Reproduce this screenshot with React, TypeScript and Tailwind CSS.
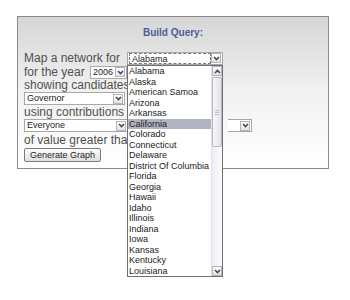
import React from 'react';

const states = [
    'Alabama', 'Alaska', 'American Samoa', 'Arizona', 'Arkansas', 'California', 'Colorado',
    'Connecticut', 'Delaware', 'District Of Columbia', 'Florida', 'Georgia', 'Hawaii', 'Idaho',
    'Illinois', 'Indiana', 'Iowa', 'Kansas', 'Kentucky', 'Louisiana',
];

const Chevron: React.FC<{ up?: boolean }> = ({ up }) => (
    <svg width="7" height="5" viewBox="0 0 7 5">
        <path d={up ? 'M1 4 L3.5 1.5 L6 4' : 'M1 1 L3.5 3.5 L6 1'} fill="none" stroke="#3c4a66" strokeWidth="1.6" />
    </svg>
);

const ArrowBox: React.FC<{ up?: boolean }> = ({ up }) => (
    <div className="w-[10px] h-[10px] border border-[#b4b4b4] bg-gradient-to-b from-white to-[#e4e4e8] flex items-center justify-center shrink-0">
        <Chevron up={up} />
    </div>
);

const Select: React.FC<{ value: string; className: string; focused?: boolean }> = ({ value, className, focused }) => (
    <div className={`h-[13px] border border-[#a8a8a8] bg-white flex items-center pr-[1px] overflow-hidden ${className}`}>
        <div className={`flex-1 h-[11px] leading-[10px] text-[9px] text-[#222] pl-[2px] whitespace-nowrap ${focused ? 'border border-dashed border-[#777] ml-[1px]' : ''}`}>
            {value}
        </div>
        <ArrowBox />
    </div>
);

export default function App() {
    return (
        <div className="w-[350px] h-[300px] bg-white pt-[16px] pl-[17px] font-['Liberation_Sans',Arial,sans-serif]">
            <div className="w-[312px] h-[153px] border border-[#8a8a8a] bg-gradient-to-b from-[#d6d6d6] via-[#f2f2f2] to-white pl-[6px] pt-[10px]">
                {/* Title */}
                <div className="h-[12px] leading-[12px] text-center text-[10px] font-bold text-[#4d5c99] pr-[6px]">
                    Build Query:
                </div>

                <div className="mt-[12px] flex flex-col text-[12px] text-[#505050]">
                    <div className="relative h-[14px] flex items-center">
                        <span className="w-[103px] leading-[14px]">Map a network for</span>
                        <Select value="Alabama" className="w-[96px]" focused />

                        {/* Open state list, drawn over the form */}
                        <div className="absolute left-[103px] top-[14px] w-[96px] h-[212px] border border-[#707070] bg-white z-10 flex">
                            <div className="flex-1 flex flex-col">
                                {states.map((s) => (
                                    <div
                                        key={s}
                                        className={`h-[10.5px] leading-[10.5px] text-[9px] pl-[1px] text-[#222] whitespace-nowrap ${s === 'California' ? 'bg-[#b1b3c2]' : ''}`}
                                    >
                                        {s}
                                    </div>
                                ))}
                            </div>
                            <div className="w-[11px] bg-gradient-to-r from-[#eeeef2] to-[#fafafc] border-l border-[#e2e2e8] flex flex-col items-center">
                                <ArrowBox up />
                                <div className="w-[10px] h-[70px] mt-[1px] border border-[#b8b8c4] rounded-[1px] bg-gradient-to-r from-[#f6f6fa] to-[#e2e2ea] flex flex-col items-center justify-center gap-[1px]">
                                    <div className="w-[4px] h-px bg-[#c0c0c8]" />
                                    <div className="w-[4px] h-px bg-[#c0c0c8]" />
                                    <div className="w-[4px] h-px bg-[#c0c0c8]" />
                                </div>
                                <div className="flex-1" />
                                <ArrowBox />
                            </div>
                        </div>
                    </div>

                    <div className="h-[14px] flex items-center">
                        <span className="w-[66px] leading-[14px]">for the year</span>
                        <Select value="2006" className="w-[37px]" />
                    </div>

                    <div className="w-[103px] h-[13px] leading-[13px] whitespace-nowrap overflow-hidden">showing candidates for</div>
                    <Select value="Governor" className="w-[101px]" />

                    <div className="w-[103px] h-[14px] leading-[14px] whitespace-nowrap overflow-hidden">using contributions from</div>
                    <div className="flex">
                        <Select value="Everyone" className="w-[103px] border-r-0" />
                        <div className="w-[24px] h-[13px] ml-[101px] border border-l-0 border-[#a8a8a8] bg-white flex items-center justify-end pr-[1px]">
                            <ArrowBox />
                        </div>
                    </div>

                    <div className="w-[103px] h-[14px] leading-[14px] mt-[1px] whitespace-nowrap overflow-hidden">of value greater than</div>

                    <button className="mt-[1px] w-[77px] h-[14px] border border-[#7a7a7a] rounded-[2px] bg-gradient-to-b from-white to-[#dedede] text-[9px] leading-[12px] text-[#222]">
                        Generate Graph
                    </button>
                </div>
            </div>
        </div>
    );
}
